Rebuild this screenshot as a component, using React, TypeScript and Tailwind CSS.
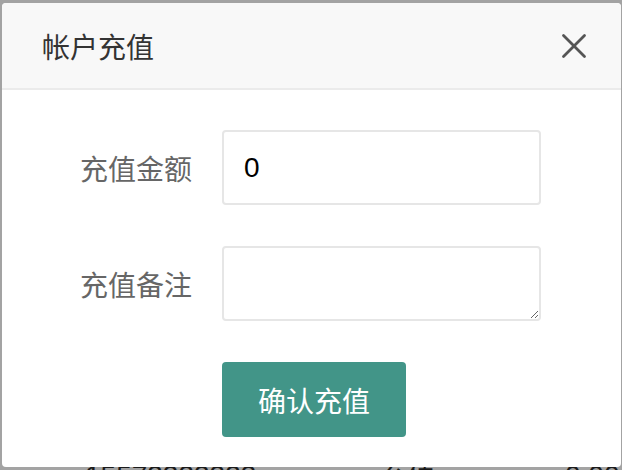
import { X } from "lucide-react";

export default function App() {
  return (
    <main className="relative w-[622px] h-[470px] overflow-hidden bg-[#a3a3a3] font-['Noto_Sans_CJK_SC',sans-serif]">
      {/* page behind the overlay */}
      <div className="flex items-start pt-[462px] pl-[85px] text-[28px] leading-none text-[#1a1a1a] font-['Liberation_Sans','Noto_Sans_CJK_SC',sans-serif]">
        <span className="w-[295px]">15573333333</span>
        <span className="w-[185px]">充值</span>
        <span>0.00</span>
      </div>

      {/* modal */}
      <div className="absolute left-[2px] top-[3px] w-[619px] h-[464px] rounded-[4px] bg-white overflow-hidden">
        <div className="flex items-center justify-between h-[87px] pl-[40px] pr-[26px] bg-[#f8f8f8] border-b-2 border-[#ebebeb]">
          <h1 className="text-[28px] leading-none text-[#333]">帐户充值</h1>
          <X className="w-[42px] h-[42px] text-[#555]" strokeWidth={1.6} />
        </div>

        <div className="flex flex-col gap-[41px] pt-[40px] pl-[78px]">
          <div className="flex items-center gap-[31px]">
            <label className="w-[111px] text-right text-[28px] leading-none text-[#666] whitespace-nowrap">
              充值金额
            </label>
            <input
              defaultValue="0"
              className="w-[319px] h-[75px] px-[20px] rounded-[4px] border-2 border-[#e6e6e6] text-[28px] text-black font-['Liberation_Sans',sans-serif] outline-none"
            />
          </div>
          <div className="flex items-center gap-[31px]">
            <label className="w-[111px] text-right text-[28px] leading-none text-[#666] whitespace-nowrap">
              充值备注
            </label>
            <textarea className="w-[319px] h-[75px] px-[20px] py-[10px] rounded-[4px] border-2 border-[#e6e6e6] text-[28px] outline-none" />
          </div>
          <div className="pl-[142px]">
            <button className="w-[184px] h-[75px] rounded-[4px] bg-[#429588] text-white text-[28px] leading-none">
              确认充值
            </button>
          </div>
        </div>
      </div>
    </main>
  );
}
